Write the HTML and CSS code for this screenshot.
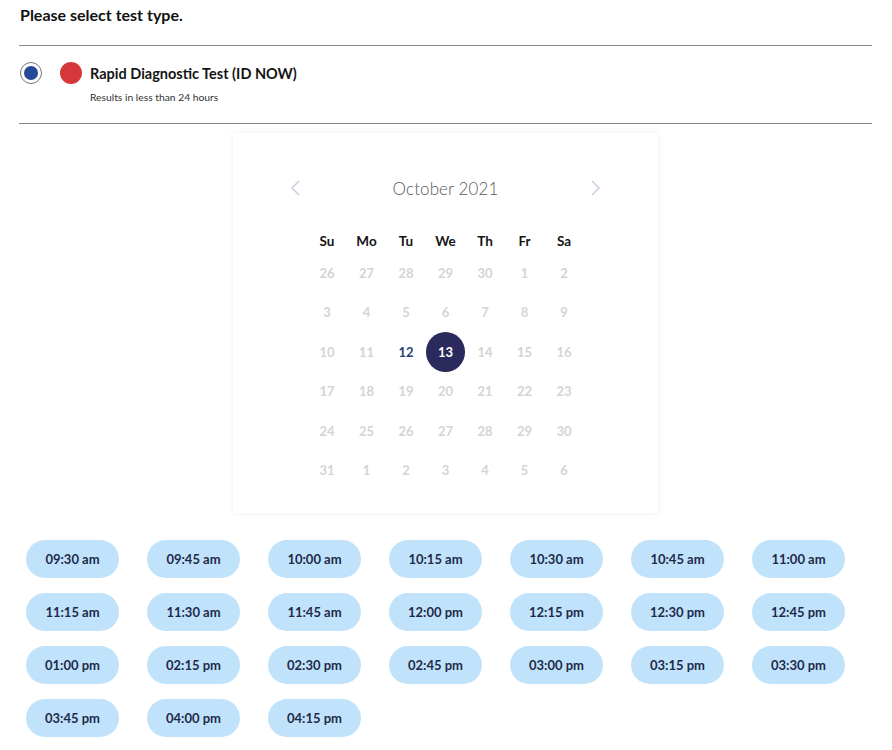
FILE: index.html
```html
<!DOCTYPE html>
<html>
<head>
<meta charset="utf-8">
<link rel="stylesheet" href="styles.css">
</head>
<body>
<div class="page">
  <h3 class="heading">Please select test type.</h3>
  <div class="option">
    <div class="option-row">
      <span class="radio"><span class="radio-dot"></span></span>
      <span class="red-dot"></span>
      <span class="option-title">Rapid Diagnostic Test (ID NOW)</span>
    </div>
    <div class="option-sub">Results in less than 24 hours</div>
  </div>
  <div class="cal-wrap">
    <div class="calendar">
      <div class="cal-head">
        <svg class="chev" width="12" height="18" viewBox="0 0 12 18"><path d="M10 2 L3 9 L10 16" fill="none" stroke="#c7d2dc" stroke-width="1.6"/></svg>
        <span class="month">October 2021</span>
        <svg class="chev" width="12" height="18" viewBox="0 0 12 18"><path d="M2 2 L9 9 L2 16" fill="none" stroke="#c7d2dc" stroke-width="1.6"/></svg>
      </div>
      <div class="weekdays">
        <span>Su</span><span>Mo</span><span>Tu</span><span>We</span><span>Th</span><span>Fr</span><span>Sa</span>
      </div>
      <div class="days">
        <span>26</span><span>27</span><span>28</span><span>29</span><span>30</span><span>1</span><span>2</span>
        <span>3</span><span>4</span><span>5</span><span>6</span><span>7</span><span>8</span><span>9</span>
        <span>10</span><span>11</span><span class="avail">12</span><span class="sel"><b>13</b></span><span>14</span><span>15</span><span>16</span>
        <span>17</span><span>18</span><span>19</span><span>20</span><span>21</span><span>22</span><span>23</span>
        <span>24</span><span>25</span><span>26</span><span>27</span><span>28</span><span>29</span><span>30</span>
        <span>31</span><span>1</span><span>2</span><span>3</span><span>4</span><span>5</span><span>6</span>
      </div>
    </div>
  </div>
  <div class="slots">
    <button class="slot">09:30 am</button>
    <button class="slot">09:45 am</button>
    <button class="slot">10:00 am</button>
    <button class="slot">10:15 am</button>
    <button class="slot">10:30 am</button>
    <button class="slot">10:45 am</button>
    <button class="slot">11:00 am</button>
    <button class="slot">11:15 am</button>
    <button class="slot">11:30 am</button>
    <button class="slot">11:45 am</button>
    <button class="slot">12:00 pm</button>
    <button class="slot">12:15 pm</button>
    <button class="slot">12:30 pm</button>
    <button class="slot">12:45 pm</button>
    <button class="slot">01:00 pm</button>
    <button class="slot">02:15 pm</button>
    <button class="slot">02:30 pm</button>
    <button class="slot">02:45 pm</button>
    <button class="slot">03:00 pm</button>
    <button class="slot">03:15 pm</button>
    <button class="slot">03:30 pm</button>
    <button class="slot">03:45 pm</button>
    <button class="slot">04:00 pm</button>
    <button class="slot">04:15 pm</button>
  </div>
</div>
</body>
</html>
```

FILE: styles.css
```css
* { box-sizing: border-box; }
html, body { margin: 0; padding: 0; background: #fff; }
body { font-family: Lato, "Noto Sans", sans-serif; color: #111; }
.page { width: 853px; margin-left: 19px; }
.heading {
  margin: 0;
  height: 46px;
  padding-top: 5px;
  font-size: 16px;
  line-height: 20px;
  font-weight: 700;
  padding-left: 1px;
  border-bottom: 1.5px solid #8a8a8a;
}
.option {
  height: 78px;
  border-bottom: 1.5px solid #8a8a8a;
  padding-top: 15px;
}
.option-row { display: flex; align-items: center; height: 24px; }
.radio {
  width: 22px; height: 22px; border-radius: 50%;
  border: 1px solid #777;
  display: flex; align-items: center; justify-content: center;
  margin-left: 1px;
}
.radio-dot { width: 14px; height: 14px; border-radius: 50%; background: #27479a; }
.red-dot { width: 22px; height: 22px; border-radius: 50%; background: #d6373a; margin-left: 18px; }
.option-title { font-size: 14.5px; font-weight: 700; margin-left: 8px; color: #151515; }
.option-sub { font-size: 10.3px; color: #333; margin-left: 71px; margin-top: 6px; line-height: 12px; }
.cal-wrap { display: flex; justify-content: center; padding-top: 9px; }
.calendar {
  width: 425px; height: 380px;
  background: #fff;
  box-shadow: 0 0 6px rgba(0,0,0,0.07);
  padding: 43px 0 0;
}
.cal-head { display: flex; align-items: center; justify-content: space-between; padding: 0 56px 0 56px; height: 24px; }
.month { font-size: 17px; font-weight: 300; color: #5a5a5a; letter-spacing: 0.1px; }
.weekdays, .days { display: grid; grid-template-columns: repeat(7, 39.5px); justify-content: center; }
.weekdays { margin-top: 29px; height: 24px; align-items: center; }
.weekdays span { text-align: center; font-size: 13.5px; font-weight: 700; color: #151515; }
.days span {
  height: 39.5px; display: flex; align-items: center; justify-content: center;
  font-size: 13px; font-weight: 700; color: #d4d4d4;
}
.days .avail { color: #2a3e78; }
.days .sel b {
  width: 40px; height: 40px; border-radius: 50%; background: #2b2a5c; color: #fff;
  display: flex; align-items: center; justify-content: center; font-weight: 700;
}
.slots {
  display: grid;
  grid-template-columns: repeat(7, 93px);
  column-gap: 28px;
  row-gap: 15px;
  padding-left: 7px;
  margin-top: 27px;
}
.slot {
  height: 38px; border: none; border-radius: 19px;
  background: #c0e3fb; color: #1f2a4a;
  font-family: Lato, "Noto Sans", sans-serif; font-size: 13px; font-weight: 700;
  padding: 0;
}
```
